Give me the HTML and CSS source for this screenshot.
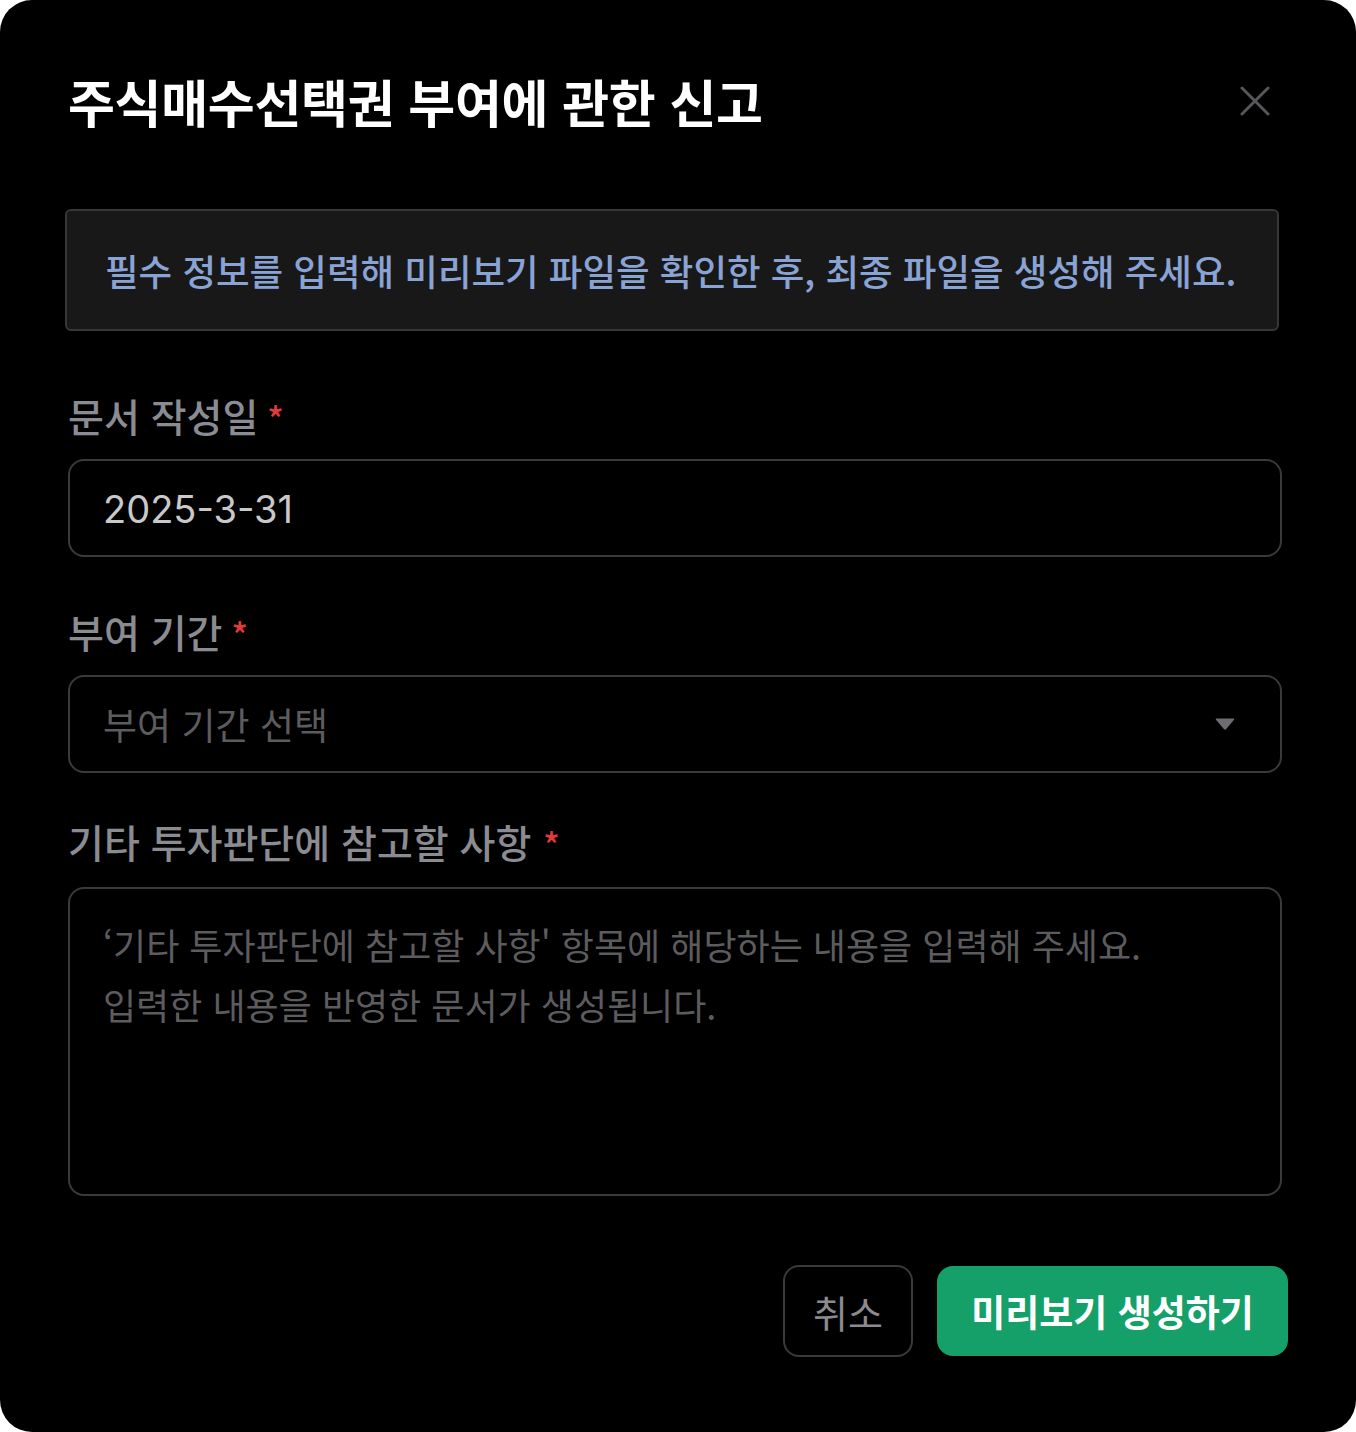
FILE: index.html
```html
<!DOCTYPE html>
<html lang="ko">
<head>
  <meta charset="utf-8">
  <title>주식매수선택권 부여에 관한 신고</title>
  <link rel="stylesheet" href="styles.css">
</head>
<body>
  <div class="modal">
    <div class="modal-header">
      <h1 class="modal-title">주식매수선택권 부여에 관한 신고</h1>
      <button class="close-btn" aria-label="닫기">
        <svg width="30" height="30" viewBox="0 0 30 30">
          <path d="M2 2 L28 28 M28 2 L2 28" stroke="#56565b" stroke-width="3" stroke-linecap="round" fill="none"/>
        </svg>
      </button>
    </div>

    <div class="notice">필수 정보를 입력해 미리보기 파일을 확인한 후, 최종 파일을 생성해 주세요.</div>

    <!-- 문서 작성일 -->
    <label class="field-label first">문서 작성일<span class="req">*</span></label>
    <div class="field value">2025-3-31</div>

    <!-- 부여 기간 -->
    <label class="field-label">부여 기간<span class="req">*</span></label>
    <div class="field select">
      <span class="placeholder">부여 기간 선택</span>
      <svg width="22" height="14" viewBox="0 0 22 14">
        <path d="M2.5 1.5 H19.5 Q21 1.5 20 2.8 L12.2 12 Q11 13.3 9.8 12 L2 2.8 Q1 1.5 2.5 1.5 Z" fill="#6c6c73"/>
      </svg>
    </div>

    <!-- 기타 투자판단 -->
    <label class="field-label third">기타 투자판단에 참고할 사항<span class="req wide">*</span></label>
    <div class="field textarea">
      <p class="placeholder">‘기타 투자판단에 참고할 사항' 항목에 해당하는 내용을 입력해 주세요.<br>입력한 내용을 반영한 문서가 생성됩니다.</p>
    </div>

    <div class="actions">
      <button class="btn cancel">취소</button>
      <button class="btn primary">미리보기 생성하기</button>
    </div>
  </div>
</body>
</html>
```

FILE: styles.css
```css
body {
  margin: 0;
  background: #ffffff;
  font-family: "Noto Sans CJK KR", "Noto Sans", sans-serif;
}

.modal {
  width: 1356px;
  height: 1432px;
  box-sizing: border-box;
  background: #000000;
  border-radius: 32px;
  padding: 0 74px 0 68px;
  display: flex;
  flex-direction: column;
}

.modal > * {
  flex-shrink: 0;
}

.modal-header {
  display: flex;
  align-items: center;
  justify-content: space-between;
  height: 64px;
  margin-top: 69px;
}

.modal-title {
  margin: 0;
  color: #ffffff;
  font-size: 51px;
  font-weight: 700;
  line-height: 64px;
  letter-spacing: -0.3px;
}

.close-btn {
  background: none;
  border: none;
  padding: 0;
  margin-right: 12px;
  width: 30px;
  height: 30px;
  cursor: pointer;
}

.notice {
  margin: 76px 3px 0 -3px;
  height: 122px;
  box-sizing: border-box;
  background: #181818;
  border: 2px solid #37373a;
  border-radius: 6px;
  padding: 0 20px 0 38px;
  display: flex;
  align-items: center;
  white-space: nowrap;
  color: #89a3d5;
  font-size: 36.5px;
  font-weight: 500;
}

.field-label {
  display: block;
  margin-top: 48px;
  height: 52px;
  line-height: 52px;
  color: #8b8b92;
  font-size: 39px;
  font-weight: 500;
}
.field-label.first { margin-top: 58px; }
.field-label.third { margin-top: 42px; }

.req {
  color: #e03b3b;
  margin-left: 9px;
  font-size: 34px;
}
.req.wide { margin-left: 12px; }

.field {
  margin-top: 18px;
  height: 98px;
  box-sizing: border-box;
  border: 2px solid #3a3a3d;
  border-radius: 16px;
  padding: 0 33px;
  display: flex;
  align-items: center;
  color: #c9c9c9;
  font-size: 40px;
}

.value {
  font-family: "Inter", "Noto Sans CJK KR", sans-serif;
  font-size: 38px;
  padding-top: 2px;
}

.placeholder {
  color: #5c5c5f;
  font-size: 37px;
}

.select {
  justify-content: space-between;
  padding-right: 44px;
}

.textarea {
  height: 309px;
  align-items: flex-start;
  margin-top: 20px;
}
.textarea .placeholder {
  margin: 25px 0 0;
  font-size: 36px;
  line-height: 60px;
}

.actions {
  display: flex;
  justify-content: flex-end;
  gap: 24px;
  margin-top: 69px;
  margin-right: -6px;
}

.btn {
  font-family: inherit;
  border-radius: 16px;
  height: 92px;
  cursor: pointer;
  font-size: 38px;
}

.cancel {
  width: 130px;
  background: #000000;
  border: 2px solid #3a3a3d;
  color: #8b8b8f;
}

.primary {
  width: 351px;
  height: 90px;
  margin-top: 1px;
  background: #14a068;
  border: none;
  color: #ffffff;
  font-weight: 700;
  font-size: 37px;
}
```
